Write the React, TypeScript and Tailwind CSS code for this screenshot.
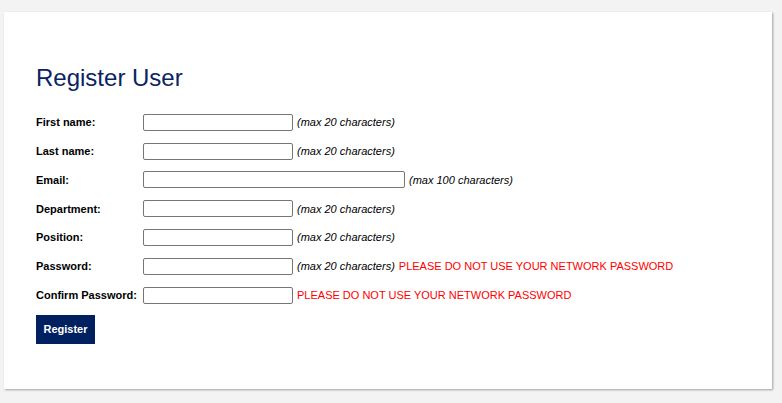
const fields = [
  { label: 'First name:', wide: false, hint: '(max 20 characters)', warn: false },
  { label: 'Last name:', wide: false, hint: '(max 20 characters)', warn: false },
  { label: 'Email:', wide: true, hint: '(max 100 characters)', warn: false },
  { label: 'Department:', wide: false, hint: '(max 20 characters)', warn: false },
  { label: 'Position:', wide: false, hint: '(max 20 characters)', warn: false },
  { label: 'Password:', wide: false, hint: '(max 20 characters)', warn: true },
  { label: 'Confirm Password:', wide: false, hint: '', warn: true },
]

export default function App() {
  return (
    <div className="min-h-[403px] bg-[#f3f3f3] pt-[12px] pl-[4px] pr-[10px] font-['Liberation_Sans',Arial,sans-serif]">
      <div className="bg-white shadow-[1px_1px_2px_rgba(0,0,0,0.35)] pl-[32px] pt-[52px] pb-[45px]">
        <h1 className="text-[24px] leading-[28px] text-[#0a2463]">Register User</h1>

        <form className="mt-[16px]" onSubmit={(e) => e.preventDefault()}>
          {fields.map((f) => (
            <div key={f.label} className="flex items-center h-[28.8px] text-[11px]">
              <label className="w-[107px] font-bold text-black">{f.label}</label>
              <input
                type={f.label.includes('Password') ? 'password' : 'text'}
                className={`${f.wide ? 'w-[262px]' : 'w-[150px]'} h-[17px] border border-[#767676] rounded-[2px] bg-white`}
              />
              {f.hint && <span className="ml-[4px] italic text-black">{f.hint}</span>}
              {f.warn && <span className="ml-[4px] text-[#ff0000]">PLEASE DO NOT USE YOUR NETWORK PASSWORD</span>}
            </div>
          ))}
          <button
            type="submit"
            className="mt-[5px] w-[59px] h-[29px] bg-[#002060] text-white text-[11px] font-bold"
          >
            Register
          </button>
        </form>
      </div>
    </div>
  )
}
